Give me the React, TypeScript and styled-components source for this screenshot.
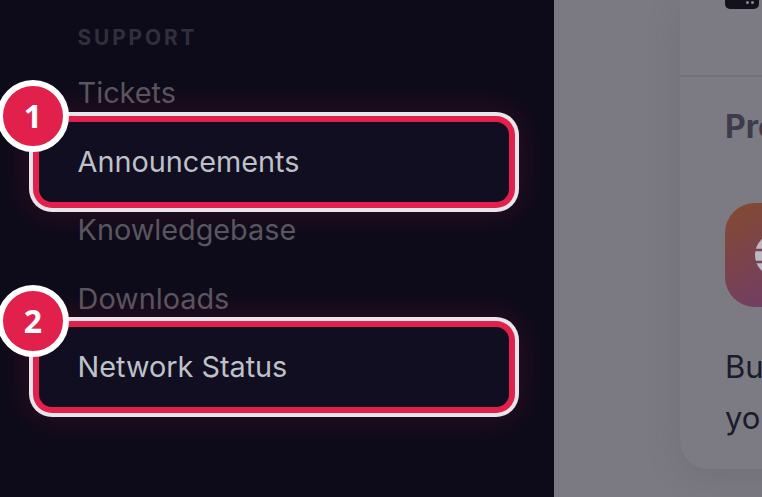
import { FC } from "react";
import styled, { createGlobalStyle } from "styled-components";

const GlobalStyle = createGlobalStyle`
  html, body {
    margin: 0;
    padding: 0;
    width: 762px;
    height: 497px;
    overflow: hidden;
    background: #7b7a82;
    font-family: Inter, "Liberation Sans", sans-serif;
  }
`;

const Page = styled.div`
  display: flex;
  width: 762px;
  height: 497px;
  overflow: hidden;
`;

const Sidebar = styled.nav`
  flex: 0 0 554px;
  box-sizing: border-box;
  height: 497px;
  padding: 25.4px 35px 0 77.6px;
  background: #0d0b1a;
`;

const SectionLabel = styled.div`
  height: 24px;
  line-height: 24px;
  font-size: 20.8px;
  font-weight: 700;
  letter-spacing: 2.9px;
  color: #312f3c;
  margin: 1px 0 9px;
`;

const NavList = styled.div`
  display: flex;
  flex-direction: column;
`;

const NavItem = styled.div<{ $active?: boolean }>`
  position: relative;
  height: 68.4px;
  line-height: 68.4px;
  font-size: 28.8px;
  white-space: nowrap;
  color: ${(props) => (props.$active ? "#bfc1c9" : "#59565f")};
`;

const Highlight = styled.div`
  position: absolute;
  box-sizing: border-box;
  left: -38.6px;
  top: -5.8px;
  width: 470px;
  height: 80px;
  border-radius: 13px;
  background: #100e20;
  box-shadow:
    0 0 0 6px #e1204c,
    0 0 0 10px #e8e6ea,
    0 0 32px 12px rgba(225, 32, 76, 0.16);
`;

const ItemText = styled.span`
  position: relative;
`;

const Badge = styled.div`
  position: absolute;
  left: -80.6px;
  top: -47.8px;
  box-sizing: border-box;
  width: 72px;
  height: 72px;
  border-radius: 50%;
  border: 6px solid #ffffff;
  background: #e1204c;
  color: #ffffff;
  display: flex;
  align-items: center;
  justify-content: center;
  font-family: "Open Sans", sans-serif;
  font-size: 32px;
  font-weight: 700;
  line-height: 1;
`;

const Main = styled.main`
  flex: 1;
  min-width: 0;
  overflow: hidden;
  padding-left: 126px;
  background: #7b7a82;
`;

const Card = styled.section`
  width: 420px;
  height: 469px;
  box-sizing: border-box;
  border-radius: 0 0 28px 28px;
  background: #7c7b83;
  box-shadow: 0 8px 34px rgba(60, 58, 70, 0.16);
`;

const CardHeader = styled.div`
  height: 77px;
  box-sizing: border-box;
  padding-left: 45px;
  border-bottom: 2px solid #75747c;
`;

const KeyHint = styled.div`
  width: 34px;
  height: 9px;
  box-sizing: border-box;
  padding-right: 5px;
  border-radius: 0 0 5px 5px;
  background: #12111c;
  display: flex;
  justify-content: flex-end;
  align-items: flex-start;
  gap: 2px;
`;

const KeyDot = styled.i`
  display: block;
  width: 3px;
  height: 3px;
  margin-top: 1px;
  border-radius: 50%;
  background: #8b8a92;
`;

const CardBody = styled.div`
  padding: 30px 0 0 45px;
`;

const CardTitle = styled.h3`
  margin: 0;
  height: 40px;
  line-height: 40px;
  font-size: 32px;
  font-weight: 700;
  white-space: nowrap;
  color: #3d3c4c;
`;

const AppIcon = styled.div`
  width: 104px;
  height: 104px;
  margin-top: 56px;
  border-radius: 30px;
  background: linear-gradient(155deg, #844a30, #6e3b70);
  display: flex;
  align-items: center;
  justify-content: center;
`;

const CardText = styled.p`
  margin: 33.5px 0 0;
  font-size: 31px;
  line-height: 51px;
  white-space: nowrap;
  color: #1b1b2b;
`;

const Globe: FC = () => (
  <svg width="44" height="44" viewBox="0 0 44 44" fill="none">
    <circle cx="22" cy="22" r="22" fill="#bdbbc2" />
    <path d="M0 17H44M0 29H44" stroke="#7a4257" strokeWidth="2.5" />
  </svg>
);

const items = [
  { label: "Tickets" },
  { label: "Announcements", badge: 1 },
  { label: "Knowledgebase" },
  { label: "Downloads" },
  { label: "Network Status", badge: 2 },
];

export default function App() {
  return (
    <Page>
      <GlobalStyle />
      <Sidebar>
        <SectionLabel>SUPPORT</SectionLabel>
        <NavList>
          {items.map((item) => (
            <NavItem key={item.label} $active={!!item.badge}>
              {item.badge && <Highlight />}
              <ItemText>{item.label}</ItemText>
              {item.badge && <Badge>{item.badge}</Badge>}
            </NavItem>
          ))}
        </NavList>
      </Sidebar>
      <Main>
        <Card>
          <CardHeader>
            <KeyHint>
              <KeyDot />
              <KeyDot />
            </KeyHint>
          </CardHeader>
          <CardBody>
            <CardTitle>Premium</CardTitle>
            <AppIcon>
              <Globe />
            </AppIcon>
            <CardText>
              Build
              <br />
              your
            </CardText>
          </CardBody>
        </Card>
      </Main>
    </Page>
  );
}
